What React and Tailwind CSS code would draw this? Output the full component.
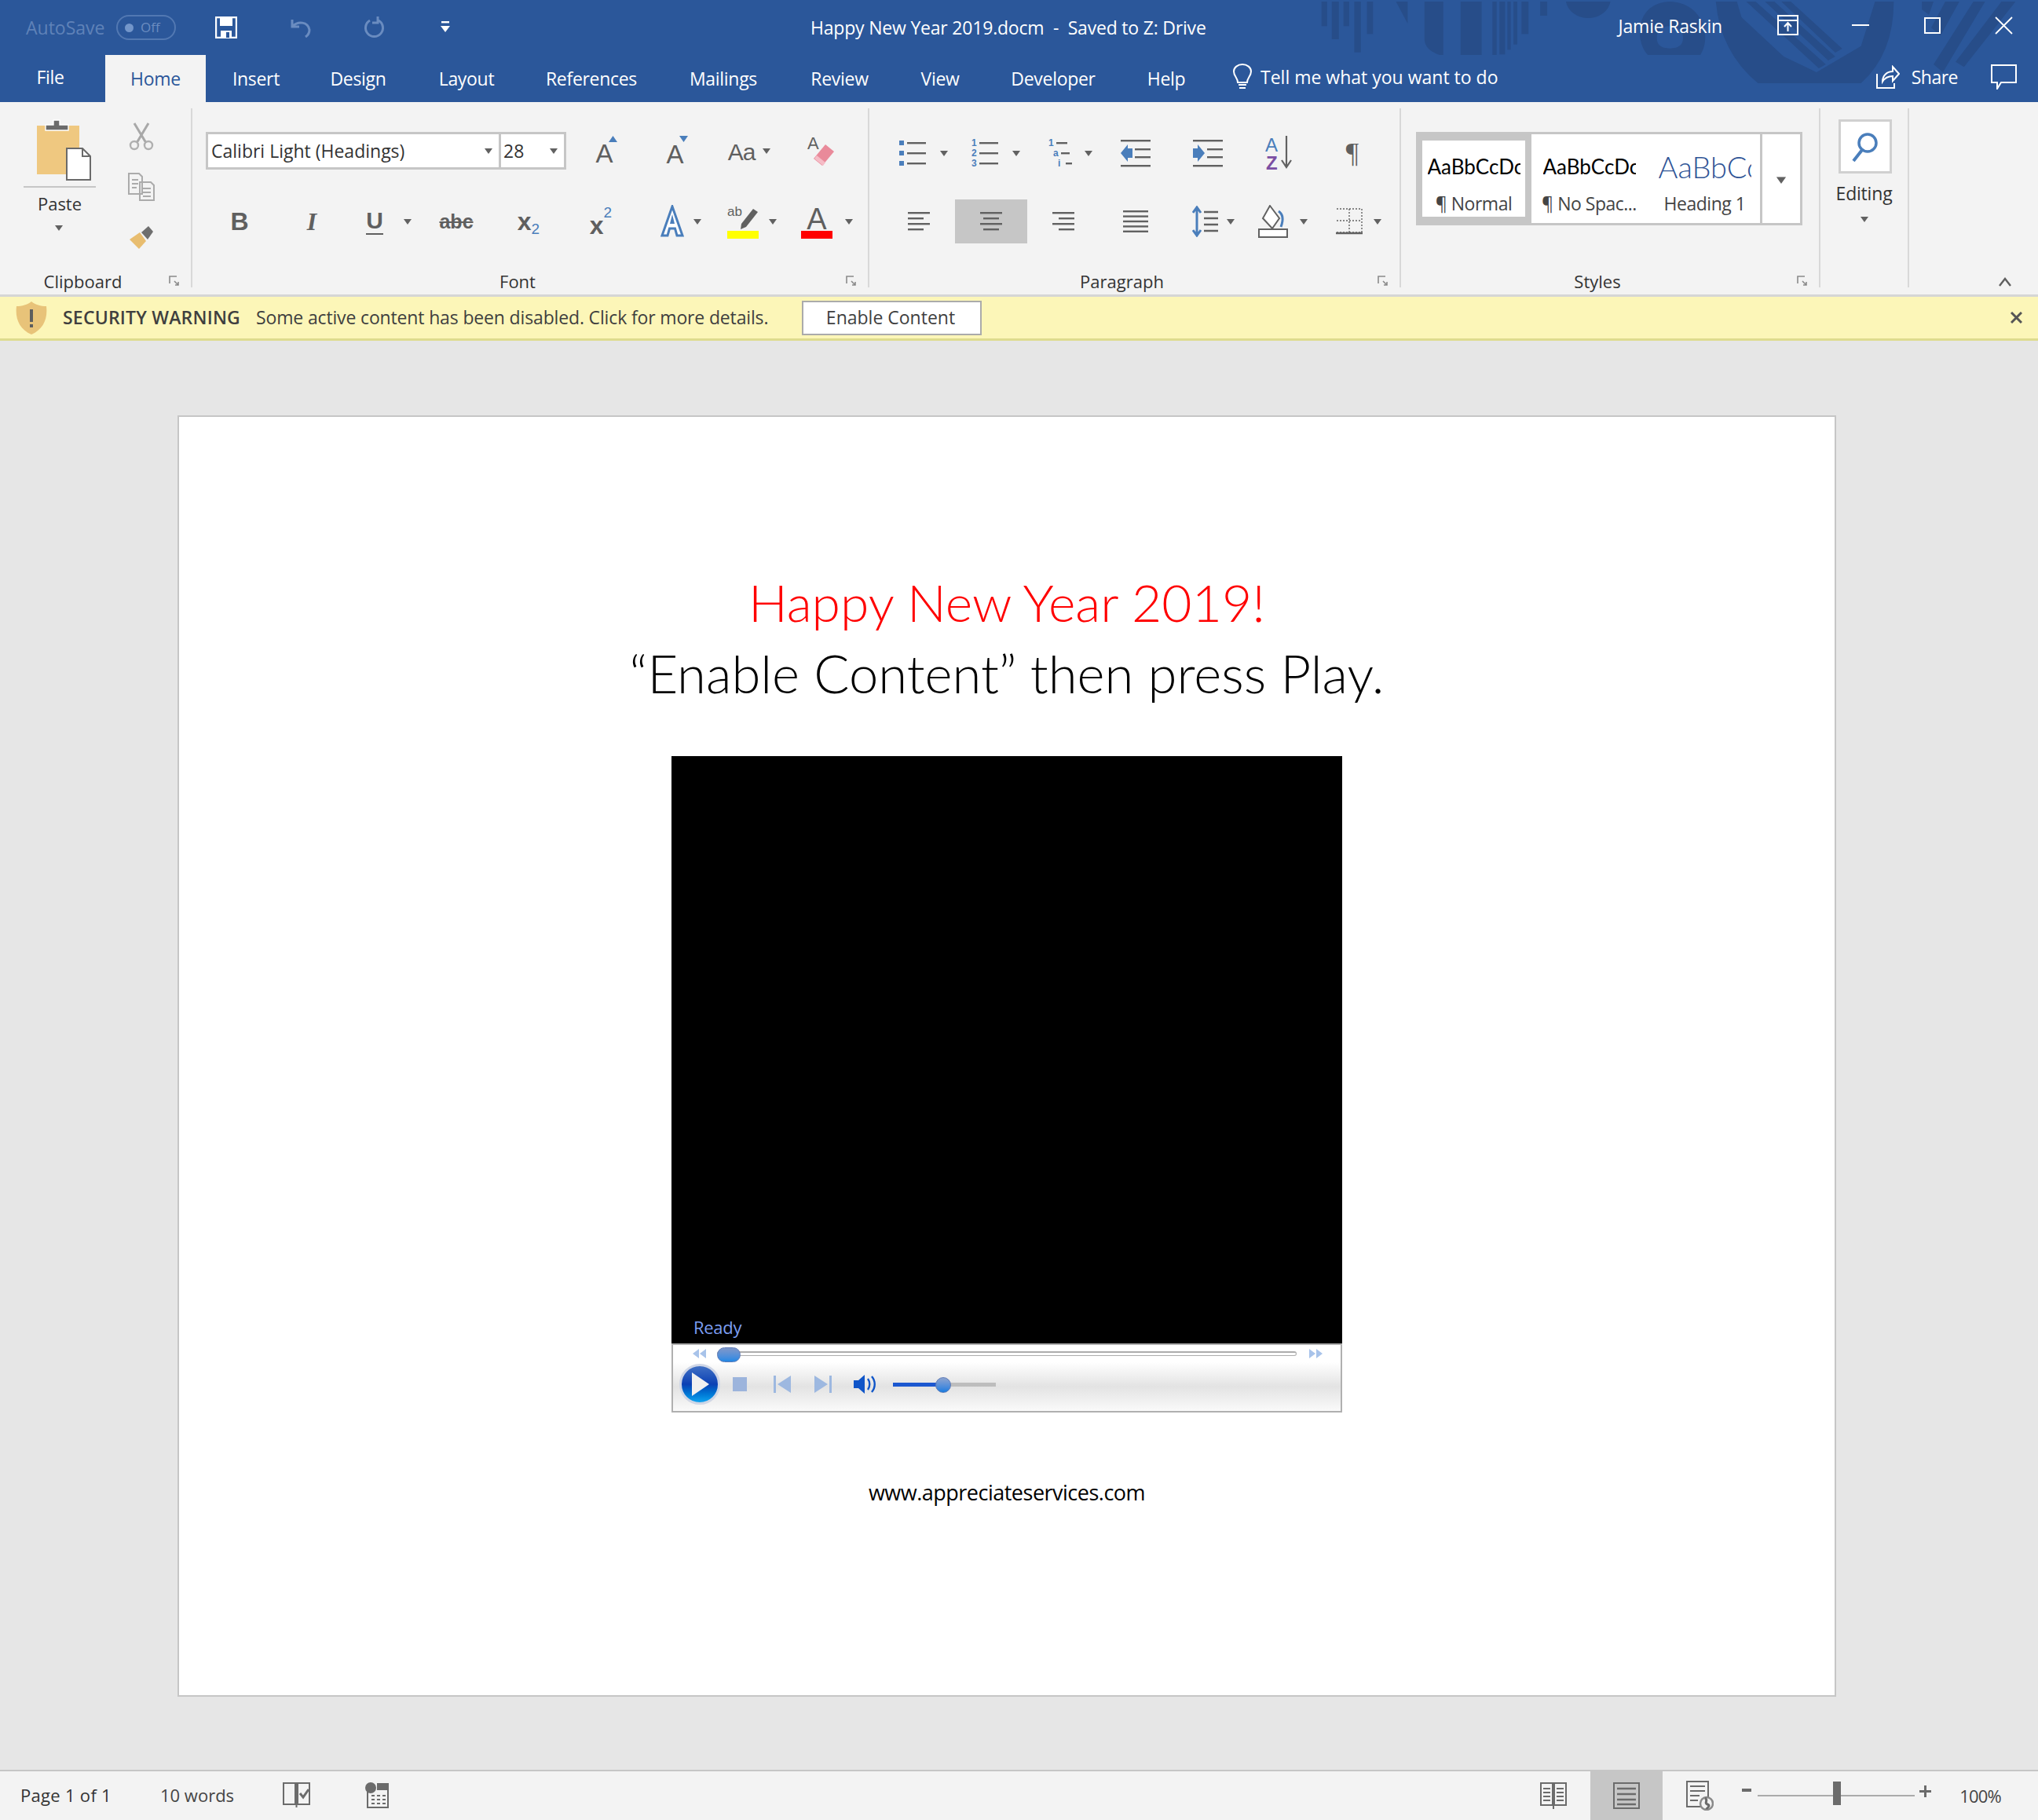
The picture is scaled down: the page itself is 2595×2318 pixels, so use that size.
import React from "react";

const ui = "font-['Open_Sans',sans-serif]";
const gray = "#616161";
const blue = "#4a7ebb";

function Caret({ color = gray, className = "" }) {
  return (
    <svg width="10" height="7" viewBox="0 0 10 7" className={`shrink-0 ${className}`}>
      <path d="M0 0h10L5 7z" fill={color} />
    </svg>
  );
}

function Launcher() {
  return (
    <svg width="14" height="14" viewBox="0 0 14 14">
      <path d="M1 10V1h9M7 7l5 5M8 12h4V8" fill="none" stroke="#8a8a8a" strokeWidth="1.6" />
    </svg>
  );
}

// one 92px wide ribbon button cell
function Cell({ children, active, className = "" }) {
  return (
    <div className={`w-[92px] h-[56px] flex items-center justify-center gap-[10px] shrink-0 ${active ? "bg-[#c6c6c6]" : ""} ${className}`}>
      {children}
    </div>
  );
}

function Group({ width, label, launcher = true, children }) {
  return (
    <div className={`${width} shrink-0 h-[228px] mt-[8px] border-r-2 border-[#d8d8d8] flex flex-col`}>
      <div className="flex-1 min-h-0">{children}</div>
      <div className="h-[24px] -mb-[4px] flex items-center shrink-0">
        <div className="flex-1 text-center text-[22px] leading-[24px] text-[#333]">{label}</div>
        <div className="w-[22px] mr-[10px] flex justify-center">{launcher && <Launcher />}</div>
      </div>
    </div>
  );
}

function ListIcon({ kind }) {
  const marks = kind === "num" ? ["1", "2", "3"] : ["1", "a", "i"];
  const xs = kind === "multi" ? [0, 6, 12] : [0, 0, 0];
  return (
    <svg width="36" height="36" viewBox="0 0 36 36">
      {[5, 18, 31].map((y, i) => (
        <g key={y}>
          {kind === "bullet" ? (
            <rect x="0" y={y - 3} width="6" height="6" fill={blue} />
          ) : (
            <text x={xs[i]} y={y + 4} fontSize="12" fontFamily="Liberation Sans" fill={blue} fontWeight="700">{marks[i]}</text>
          )}
          <rect x={xs[i] + 10} y={y - 1} width={kind === "multi" ? 14 - i * 3 : 24} height="2.4" fill={gray} />
        </g>
      ))}
    </svg>
  );
}

function IndentIcon({ flip }) {
  return (
    <svg width="38" height="36" viewBox="0 0 38 36">
      {[2, 13, 23, 34].map((y, i) => (
        <rect key={y} x={i === 0 || i === 3 ? 0 : 18} y={y - 1} width={i === 0 || i === 3 ? 38 : 20} height="2.4" fill={gray} />
      ))}
      {flip ? <path d="M0 12h6V7l9 11-9 11v-5H0z" fill={blue} /> : <path d="M15 12H9V7L0 18l9 11v-5h6z" fill={blue} />}
    </svg>
  );
}

function AlignIcon({ mode }) {
  const rows = mode === "justify"
    ? [[0, 32], [0, 32], [0, 32], [0, 32], [0, 32]]
    : [[0, 28], [4, 20], [0, 28], [4, 20]];
  return (
    <svg width="32" height="28" viewBox="0 0 32 28">
      {rows.map(([x, w], i) => (
        <rect key={i} x={mode === "justify" ? 0 : mode === "right" ? 30 - w : mode === "left" ? 2 : 2 + x} y={mode === "justify" ? i * 6.4 : 2 + i * 7} width={w} height="2.4" fill={gray} />
      ))}
    </svg>
  );
}

function Clipboard() {
  return (
    <svg width="70" height="78" viewBox="0 0 70 78">
      <rect x="0" y="8" width="54" height="62" fill="#efc880" />
      <path d="M11 14V7h10V1h8v6h11v7z" fill="#6b6b6b" stroke="#fff" strokeWidth="1.4" />
      <path d="M38 37h20l10 10v30H38z" fill="#fff" stroke="#6a6a6a" strokeWidth="2" />
      <path d="M58 37v10h10" fill="none" stroke="#6a6a6a" strokeWidth="2" />
    </svg>
  );
}

function TitleArt() {
  const bars = [[38, 50, 100], [60, 75, 150], [85, 97, 100], [108, 122, 200], [135, 148, 130], [335, 380, 210], [403, 412, 210], [418, 430, 208], [435, 442, 190], [448, 456, 170], [465, 480, 130], [505, 520, 60]];
  return (
    <svg className="absolute left-[1660px] top-0 pointer-events-none" width="935" height="130" viewBox="0 0 1568 390" preserveAspectRatio="none">
      <g fill="#274d89">
        {bars.map(([a, b, h]) => <rect key={a} x={a} y="6" width={b - a} height={h - 6} />)}
        <path d="M197 6h25v84zM258 6h40v204h-8q-32-20-32-60zM560 6h95a48 74 0 0 1-95 0z" />
        <path fillRule="evenodd" d="M735 210c-30-60-25-200 47-204 72 4 90 140 65 204zM782 100c-20 0-28 20-28 45s8 40 28 40 28-15 28-40-8-45-28-45z" />
        <path d="M880 6h45l10 60 90 150 70 60 95-100 30-170h40q0 200-70 312H970Q890 200 880 6z" />
        <path d="M945 6h20l150 240-15 15zM985 6h20l130 210-15 15zM1020 6h20l110 180-15 15z" />
        <path d="M1320 6h25l-10 50-15-20zM1370 6h30l-40 130-20-30zM1430 6h25l-90 270-20-30zM1490 6h30l-110 250-18-20z" />
      </g>
    </svg>
  );
}

function TitleBar() {
  return (
    <div className="relative z-10 h-[70px] flex items-center text-white text-[23px]">
      <div className="relative w-[1032px] shrink-0 flex items-center">
        <span className="ml-[33px] w-[115px] text-[#5f82b8]">AutoSave</span>
        <div className="w-[76px] h-[32px] rounded-full border-2 border-[#5278b2] flex items-center gap-[9px] pl-[9px] text-[17px] text-[#6a8cc0]">
          <span className="w-[11px] h-[11px] rounded-full bg-[#7396ca]" />Off
        </div>
        <svg className="ml-[50px]" width="28" height="28" viewBox="0 0 28 28">
          <path d="M1 1h26v26H1z" fill="none" stroke="#fff" strokeWidth="2.4" />
          <rect x="6" y="2" width="16" height="10" fill="#fff" />
          <rect x="7" y="18" width="14" height="9" fill="#fff" />
          <rect x="14" y="20" width="4" height="7" fill="#2b579a" />
        </svg>
        <svg className="ml-[68px]" width="26" height="26" viewBox="0 0 26 26">
          <path d="M3 11c6-6 19-6 21 5 0 4-2 7-5 9M2 3v9h9" fill="none" stroke="#6a8cc0" strokeWidth="3" />
        </svg>
        <svg className="ml-[66px]" width="28" height="28" viewBox="0 0 28 28">
          <path d="M9 5a11 11 0 1 0 11 0M19 0v8h-7" fill="none" stroke="#6a8cc0" strokeWidth="3" />
        </svg>
        <svg className="ml-[70px]" width="14" height="18" viewBox="0 0 14 18">
          <rect x="2" y="1" width="10" height="2.4" fill="#fff" />
          <path d="M1 7h12l-6 8z" fill="#fff" />
        </svg>
      </div>
      <span className="relative tracking-[-0.2px]">Happy New Year 2019.docm&nbsp; -&nbsp; Saved to Z: Drive</span>
      <div className="relative ml-auto flex items-center h-full">
        <span className="tracking-[-0.2px] mb-[4px]">Jamie Raskin</span>
        <svg className="ml-[70px] mb-[6px]" width="27" height="26" viewBox="0 0 27 26">
          <path d="M1 1h25v24H1zM1 7h25M13.500 21V11M9 15l4.500-5 4.500 5" fill="none" stroke="#fff" strokeWidth="2" />
        </svg>
        <span className="ml-[68px] mb-[6px] w-[22px] h-[2px] bg-white" />
        <span className="ml-[70px] mb-[6px] w-[21px] h-[21px] border-2 border-white" />
        <svg className="ml-[69px] mr-[32px] mb-[6px]" width="23" height="23" viewBox="0 0 23 23">
          <path d="M1 1l21 21M22 1L1 22" stroke="#fff" strokeWidth="1.8" />
        </svg>
      </div>
    </div>
  );
}

function TabBar() {
  const tabs = [
    ["Insert", "w-[128px]"], ["Design", "w-[132px]"], ["Layout", "w-[144px]"], ["References", "w-[174px]"],
    ["Mailings", "w-[162px]"], ["Review", "w-[134px]"], ["View", "w-[122px]"], ["Developer", "w-[166px]"], ["Help", "w-[122px]"],
  ];
  return (
    <div className="relative z-10 h-[60px] flex items-stretch text-white text-[23px] tracking-[-0.3px]">
      <div className="w-[134px] flex items-center justify-center pb-[4px] pr-[6px]">File</div>
      <div className="w-[128px] bg-[#f3f3f3] text-[#2b579a] flex items-center justify-center">Home</div>
      {tabs.map(([name, w]) => (
        <div key={name} className={`${w} flex items-center justify-center`}>{name}</div>
      ))}
      <div className="flex items-center ml-[23px] mb-[4px]">
        <svg width="26" height="34" viewBox="0 0 26 34">
          <path d="M7 24c0-6-5-8-5-14a11 9 0 0 1 22 0c0 6-5 8-5 14zM8 27h10M9 31h8" fill="none" stroke="#fff" strokeWidth="2" />
        </svg>
        <span className="ml-[10px] tracking-normal">Tell me what you want to do</span>
      </div>
      <div className="ml-auto flex items-center mb-[4px]">
        <svg width="30" height="30" viewBox="0 0 30 30">
          <path d="M1 11v18h22v-6M8 21c0-8 6-13 13-13V2l8 9-8 9v-6c-6 0-10 2-13 7z" fill="none" stroke="#fff" strokeWidth="2" />
        </svg>
        <span className="ml-[15px] tracking-[-0.5px]">Share</span>
        <svg className="ml-[42px] mr-[27px]" width="33" height="32" viewBox="0 0 33 32">
          <path d="M1 1h31v22H13l-5 8v-8H1z" fill="none" stroke="#fff" strokeWidth="2" />
        </svg>
      </div>
    </div>
  );
}

function ClipboardGroup() {
  return (
    <Group width="w-[245px]" label="Clipboard">
      <div className="flex h-full">
        <div className="ml-[30px] w-[92px] flex flex-col items-center">
          <div className="mt-[14px] ml-[12px] h-[85px]"><Clipboard /></div>
          <div className="w-[92px] h-[2px] bg-[#c6c6c6]" />
          <div className="mt-[6px] text-[22px] leading-[28px] text-[#333]">Paste</div>
          <Caret className="mt-[14px] -ml-[2px]" />
        </div>
        <div className="ml-[36px] w-[44px] flex flex-col items-center">
          <svg className="mt-[18px]" width="32" height="36" viewBox="0 0 32 36">
            <path d="M7 1l15 25M25 1L10 26" stroke="#a8a8a8" strokeWidth="3" />
            <circle cx="7" cy="29" r="5" fill="none" stroke="#b0b0b0" strokeWidth="2.4" />
            <circle cx="25" cy="29" r="5" fill="none" stroke="#b0b0b0" strokeWidth="2.4" />
          </svg>
          <svg className="mt-[28px]" width="34" height="36" viewBox="0 0 34 36">
            <path d="M1 1h13l4 4v22H1zM15 12h14l4 4v19H15z" fill="#f3f3f3" stroke="#ababab" strokeWidth="2" />
            <path d="M5 9h8M5 14h8M5 19h6M19 20h10M19 25h10M19 30h10" stroke="#ababab" strokeWidth="2" />
          </svg>
          <svg className="mt-[30px]" width="34" height="32" viewBox="0 0 34 32">
            <path d="M2 19L15 10l8 11-9 10z" fill="#e8bd6f" />
            <path d="M17 10l9-8 6 7-7 10z" fill="#6e6e6e" />
          </svg>
        </div>
      </div>
    </Group>
  );
}

const glyph = "font-['Liberation_Sans',sans-serif] text-[#5f5f5f] leading-none";

function FontGroup() {
  return (
    <Group width="w-[862px]" label="Font">
      <div className="flex items-center h-[48px] mt-[30px] ml-[17px]">
        <div className="w-[373px] h-[48px] bg-white border-[3px] border-r-0 border-[#c6c6c6] flex items-center pl-[4px] pr-[8px] text-[23px] text-[#333]">
          <span className="flex-1">Calibri Light (Headings)</span>
          <Caret />
        </div>
        <div className="w-[86px] h-[48px] bg-white border-[3px] border-[#c6c6c6] flex items-center pl-[3px] pr-[8px] text-[23px] text-[#333]">
          <span className="flex-1">28</span>
          <Caret />
        </div>
        <div className="ml-[3px] flex">
          <Cell>
            <span className="relative mt-[8px] ml-[4px]">
              <span className={`${glyph} text-[33px]`}>A</span>
            </span>
            <svg className="-ml-[16px] -mt-[30px]" width="11" height="8" viewBox="0 0 11 8"><path d="M0 8h11L5.500 0z" fill={blue} /></svg>
          </Cell>
          <Cell>
            <span className={`${glyph} text-[33px] mt-[8px]`}>A</span>
            <svg className="-ml-[16px] -mt-[30px]" width="11" height="8" viewBox="0 0 11 8"><path d="M0 0h11L5.500 8z" fill={blue} /></svg>
          </Cell>
          <Cell className="gap-[2px]">
            <span className={`${glyph} text-[30px] tracking-[-1px] mt-[3px]`}>Aa</span>
            <Caret />
          </Cell>
          <Cell>
            <svg width="40" height="40" viewBox="0 0 40 40">
              <text x="2" y="18" fontSize="22" fontFamily="Liberation Sans" fill={gray}>A</text>
              <path d="M25 12l11 9-15 18-11-9z" fill="#e98a9a" />
              <path d="M14 26l11 9-3 4-11-9z" fill="#f5bcc6" />
            </svg>
          </Cell>
        </div>
      </div>
      <div className="flex h-[56px] mt-[38px] ml-[14px] items-center">
        <Cell><span className={`${glyph} text-[32px] font-bold`}>B</span></Cell>
        <Cell><span className="text-[32px] leading-none italic font-bold text-[#5f5f5f] font-['Liberation_Serif',serif]">I</span></Cell>
        <Cell className="gap-[26px] pl-[12px]">
          <span className={`${glyph} text-[30px] font-bold border-b-2 border-[#5f5f5f] pb-[1px]`}>U</span>
          <Caret />
        </Cell>
        <Cell>
          <span className={`${glyph} text-[25px] font-bold line-through`}>abc</span>
        </Cell>
        <Cell>
          <span className="flex items-end">
            <span className={`${glyph} text-[32px] font-bold`}>x</span>
            <span className="text-[19px] leading-none font-['Liberation_Sans',sans-serif] text-[#4a7ebb] -mb-[3px]">2</span>
          </span>
        </Cell>
        <Cell>
          <span className="flex items-start">
            <span className={`${glyph} text-[32px] font-bold mt-[10px]`}>x</span>
            <span className="text-[19px] leading-none font-['Liberation_Sans',sans-serif] text-[#4a7ebb]">2</span>
          </span>
        </Cell>
        <Cell className="pl-[18px] gap-[8px]">
          <svg width="34" height="42" viewBox="0 0 34 42">
            <path d="M17 2L4 39h7l2.500-9h7l2.500 9h7z" fill="#fff" stroke="#4a7ebb" strokeWidth="3" />
            <path d="M17 12l-3 12h6z" fill="#4a7ebb" />
          </svg>
          <Caret />
        </Cell>
        <Cell className="w-[88px] gap-[13px] pl-[16px]">
          <div className="flex flex-col w-[40px] h-[44px]">
            <svg width="40" height="34" viewBox="0 0 40 34">
              <text x="0" y="15" fontSize="17" fontFamily="Liberation Sans" fill={gray}>ab</text>
              <path d="M33 6l6 4-15 19-7 3 1-7z" fill={gray} />
            </svg>
            <div className="h-[10px] bg-[#ffff00]" />
          </div>
          <Caret />
        </Cell>
        <Cell className="gap-[16px] pl-[24px]">
          <div className="flex flex-col items-center w-[40px]">
            <span className={`${glyph} text-[38px] h-[34px] leading-[34px]`}>A</span>
            <div className="h-[10px] w-[40px] bg-[#ff0000]" />
          </div>
          <Caret />
        </Cell>
      </div>
    </Group>
  );
}

function ParagraphGroup() {
  return (
    <Group width="w-[677px]" label="Paragraph">
      <div className="flex mt-[29px] ml-[17px]">
        <Cell className="gap-[16px] pl-[12px]"><ListIcon kind="bullet" /><Caret /></Cell>
        <Cell className="gap-[16px] pl-[12px]"><ListIcon kind="num" /><Caret /></Cell>
        <Cell className="gap-[1px] pl-[18px]"><ListIcon kind="multi" /><Caret /></Cell>
        <Cell><IndentIcon /></Cell>
        <Cell><IndentIcon flip /></Cell>
        <Cell>
          <svg width="38" height="44" viewBox="0 0 38 44">
            <text x="0" y="20" fontSize="24" fontFamily="Liberation Sans" fill={blue}>A</text>
            <text x="1" y="43" fontSize="24" fontWeight="700" fontFamily="Liberation Sans" fill="#7b4fa3">Z</text>
            <path d="M27 0v38M21 31l6 9 6-9" fill="none" stroke={gray} strokeWidth="2.200" />
          </svg>
        </Cell>
        <Cell><span className="font-['Liberation_Serif',serif] text-[36px] leading-none text-[#5f5f5f]">¶</span></Cell>
      </div>
      <div className="flex mt-[31px] ml-[17px]">
        <Cell><AlignIcon mode="left" /></Cell>
        <Cell active><AlignIcon mode="center" /></Cell>
        <Cell><AlignIcon mode="right" /></Cell>
        <Cell><AlignIcon mode="justify" /></Cell>
        <Cell className="gap-[5px] pl-[14px]">
          <svg width="34" height="40" viewBox="0 0 34 40">
            <path d="M6 2v36M1 9l5-7 5 7M1 31l5 7 5-7" fill="none" stroke={blue} strokeWidth="3" />
            <path d="M15 8h18M15 16h18M15 24h18M15 32h18" stroke={gray} strokeWidth="2.600" />
          </svg>
          <Caret />
        </Cell>
        <Cell className="gap-[15px] pl-[6px]">
          <svg width="38" height="42" viewBox="0 0 38 42">
            <path d="M15 1l12 16-9 13L6 17z" fill="#fff" stroke={gray} strokeWidth="2" />
            <path d="M26 8c6 4 6 12 3 20" fill="none" stroke={blue} strokeWidth="3" />
            <rect x="1" y="31" width="36" height="10" fill="#fff" stroke={gray} strokeWidth="2" />
          </svg>
          <Caret />
        </Cell>
        <Cell className="gap-[14px] pl-[16px]">
          <svg width="34" height="34" viewBox="0 0 34 34">
            <path d="M1 1h32v30H1M1 16h32M17 1v30" fill="none" stroke={gray} strokeWidth="1.400" strokeDasharray="2 2" />
            <path d="M0 32h34" stroke={gray} strokeWidth="2.600" />
          </svg>
          <Caret />
        </Cell>
      </div>
    </Group>
  );
}

function StyleSample({ sample, label, sel, big }) {
  return (
    <div className={`w-[147px] h-[113px] flex flex-col items-center shrink-0 border-[8px] ${sel ? "border-[#c6c6c6]" : "border-transparent"}`}>
      <div className={`h-[66px] w-[118px] overflow-hidden whitespace-nowrap flex items-center justify-start font-['Lato',sans-serif] ${big ? "text-[38px] text-[#2f5496] font-light" : "text-[26px] text-black"}`}>
        {sample}
      </div>
      <div className="text-[23px] leading-[28px] text-[#444] tracking-[-0.5px] whitespace-nowrap">{label}</div>
    </div>
  );
}

function StylesGroup() {
  return (
    <Group width="w-[534px]" label="Styles">
      <div className="flex ml-[19px] mt-[30px] h-[119px] w-[492px] bg-white border-y-[3px] border-[#c6c6c6]">
        <div className="flex w-[438px] overflow-hidden">
          <StyleSample sample="AaBbCcDc" label="¶ Normal" sel />
          <StyleSample sample="AaBbCcDc" label="¶ No Spac..." />
          <StyleSample sample="AaBbCc" label="Heading 1" big />
        </div>
        <div className="flex-1 border-x-[3px] border-[#c6c6c6] flex justify-center pt-[55px]">
          <Caret className="scale-125" />
        </div>
      </div>
    </Group>
  );
}

function Ribbon() {
  return (
    <div className="h-[245px] bg-[#f3f3f3] flex">
      <ClipboardGroup />
      <FontGroup />
      <ParagraphGroup />
      <StylesGroup />
      <div className="w-[113px] h-[228px] mt-[8px] border-r-2 border-[#d8d8d8] flex flex-col items-center shrink-0">
        <div className="mt-[14px] ml-[2px] w-[68px] h-[69px] bg-white border-[3px] border-[#d0d0d0] flex items-center justify-center">
          <svg width="36" height="40" viewBox="0 0 36 40">
            <circle cx="21" cy="15" r="11" fill="none" stroke={blue} strokeWidth="3.500" />
            <path d="M14 24L3 38" stroke={blue} strokeWidth="4" />
          </svg>
        </div>
        <div className="mt-[11px] text-[23px] leading-[28px] text-[#333] tracking-[-0.2px]">Editing</div>
        <Caret className="mt-[16px]" />
      </div>
      <div className="flex-1 flex items-end justify-end pb-[10px] pr-[34px]">
        <svg width="16" height="12" viewBox="0 0 16 12">
          <path d="M1 11l7-9 7 9" fill="none" stroke="#5f5f5f" strokeWidth="2.400" />
        </svg>
      </div>
    </div>
  );
}

function WarningBar() {
  return (
    <div className="h-[59px] bg-[#fcf6b8] border-t-[3px] border-b-[3px] border-t-[#d6d6d6] border-b-[#dedc8e] flex items-center text-[#3f3f3f] text-[23px]">
      <svg className="ml-[20px]" width="40" height="44" viewBox="0 0 40 44">
        <path d="M20 1c5 4 12 6 19 6 2 16-4 30-19 36C5 37-1 23 1 7c7 0 14-2 19-6z" fill="#e8c379" />
        <rect x="18" y="11" width="4" height="16" fill="#5d5d5d" />
        <rect x="18" y="30" width="4" height="4" fill="#5d5d5d" />
      </svg>
      <span className="ml-[20px] tracking-[0.2px] font-semibold w-[246px] whitespace-nowrap">SECURITY WARNING</span>
      <span className="tracking-[-0.15px] w-[695px] whitespace-nowrap">Some active content has been disabled. Click for more details.</span>
      <div className="w-[229px] h-[44px] bg-white border-[2px] border-[#ababab] flex items-center justify-center pr-[3px]">Enable Content</div>
      <svg className="ml-auto mr-[20px]" width="15" height="15" viewBox="0 0 15 15">
        <path d="M1 1l13 13M14 1L1 14" stroke="#555" strokeWidth="3" />
      </svg>
    </div>
  );
}

function Transport({ d, w = 22, h = 22, color = "#9db8e0" }) {
  return (
    <svg width={w} height={h} viewBox={`0 0 ${w} ${h}`}>
      <path d={d} fill={color} />
    </svg>
  );
}

function Player() {
  return (
    <div className="w-[854px] mt-[61px] flex flex-col">
      <div className="h-[748px] bg-black flex items-end pb-[7px] pl-[28px]">
        <span className="text-[22px] text-[#7c9ef2] leading-[28px] tracking-[-0.3px] font-['Open_Sans',sans-serif]">Ready</span>
      </div>
      <div className="h-[88px] border-2 border-[#b0b0b0] flex flex-col">
        <div className="h-[22px] flex items-center pl-[25px] bg-white">
          <Transport w={17} h={12} color="#a8c3ea" d="M8 0v12L0 6zM17 0v12L9 6z" />
          <div className="ml-[14px] w-[738px] h-[6px] border border-[#adadad] border-t-2 rounded-full relative">
            <div className="absolute -left-[1px] -top-[7px] w-[30px] h-[19px] rounded-full bg-gradient-to-b from-[#7e97c9] to-[#1e88e5] border border-[#5e7bb8]" />
          </div>
          <div className="ml-[16px]">
            <Transport w={17} h={12} color="#a8c3ea" d="M0 0v12l8-6zM9 0v12l8-6z" />
          </div>
        </div>
        <div className="flex-1 flex items-center pl-[8px] bg-gradient-to-b from-white via-[#e3e3e3] to-[#fafafa] pb-[6px]">
          <div className="w-[52px] h-[52px] rounded-full bg-gradient-to-b from-[#3f6fc4] via-[#0a3fb4] to-[#12a4f0] border-[3px] border-[#cfd6e6] flex items-center justify-center">
            <Transport w={24} h={30} color="#f0f0f0" d="M2 0l22 15L2 30z" />
          </div>
          <div className="ml-[16px] w-[18px] h-[18px] bg-[#9cb4dc]" />
          <div className="ml-[34px]"><Transport d="M0 0h3v22H0zM22 0v22L5 11z" /></div>
          <div className="ml-[30px]"><Transport d="M22 0h-3v22h3zM0 0v22l17-11z" /></div>
          <svg className="ml-[28px]" width="30" height="26" viewBox="0 0 30 26">
            <path d="M0 8h6l8-7v24l-8-7H0z" fill="#0f55c8" />
            <path d="M18 6c3 4 3 10 0 14M23 3c5 6 5 14 0 20" fill="none" stroke="#0f55c8" strokeWidth="2.400" />
          </svg>
          <div className="ml-[20px] w-[131px] h-[5px] bg-[#bdbdbd] relative">
            <div className="h-full w-[64px] bg-[#1c58d0]" />
            <div className="absolute left-[54px] -top-[7px] w-[20px] h-[20px] rounded-full bg-gradient-to-b from-[#8ba3d0] to-[#0e7ce0] border border-[#5e7bb8]" />
          </div>
        </div>
      </div>
    </div>
  );
}

function StatusBar() {
  return (
    <div className="h-[64px] bg-[#f3f3f3] border-t-2 border-[#c6c6c6] flex items-stretch text-[22px] text-[#444]">
      <div className="flex items-center pb-[2px]">
        <span className="ml-[26px] w-[178px] tracking-[0.3px] text-[#333]">Page 1 of 1</span>
        <span className="w-[156px]">10 words</span>
        <svg width="35" height="32" viewBox="0 0 35 32">
          <path d="M1 1h15v27H1zM19 1h15v27H19zM17.500 0v32" fill="none" stroke="#6b6b6b" strokeWidth="2" />
          <path d="M22 14l4 5 7-10" fill="none" stroke="#6b6b6b" strokeWidth="3" />
        </svg>
        <svg className="ml-[70px]" width="30" height="34" viewBox="0 0 30 34">
          <path d="M3 12v21h26V3H15" fill="none" stroke="#6b6b6b" strokeWidth="2" />
          <rect x="15" y="3" width="14" height="8" fill="#6b6b6b" />
          <circle cx="7" cy="8" r="7" fill="#6b6b6b" />
          <path d="M8 18h18M8 23h18M8 28h18" stroke="#6b6b6b" strokeWidth="2" strokeDasharray="4 3" />
        </svg>
      </div>
      <div className="ml-auto flex items-stretch">
        <div className="flex items-center w-[64px]">
          <svg width="34" height="34" viewBox="0 0 34 34">
            <path d="M1 1h15v28H1zM18 1h15v28H18zM17 0v34M4 8h9M4 13h9M4 18h9M4 23h9M21 8h9M21 13h9M21 18h9M21 23h9" fill="none" stroke="#6b6b6b" strokeWidth="2" />
          </svg>
        </div>
        <div className="w-[92px] bg-[#c6c6c6] flex items-center justify-center">
          <svg width="34" height="34" viewBox="0 0 34 34">
            <path d="M1 1h32v32H1z" fill="none" stroke="#6b6b6b" strokeWidth="2" />
            <path d="M5 8h24M5 15h24M5 22h24M5 28h24" stroke="#6b6b6b" strokeWidth="2.400" />
          </svg>
        </div>
        <div className="flex items-center pl-[30px]">
          <svg width="35" height="38" viewBox="0 0 35 38">
            <path d="M1 1h27v32H1z" fill="none" stroke="#6b6b6b" strokeWidth="2" />
            <path d="M5 7h19M5 13h19M5 19h12M5 25h10" stroke="#6b6b6b" strokeWidth="2" />
            <circle cx="26" cy="29" r="8" fill="#f3f3f3" stroke="#8a8a8a" strokeWidth="2.500" />
            <path d="M24 22c5 3 -2 6 3 8s-1 5-1 6" fill="none" stroke="#6b6b6b" strokeWidth="3" />
          </svg>
          <div className="ml-[36px] w-[12px] h-[4px] bg-[#6b6b6b] mb-[14px]" />
          <div className="ml-[8px] w-[200px] h-[2px] bg-[#ababab] relative">
            <div className="absolute left-[96px] -top-[17px] w-[10px] h-[30px] bg-[#6b6b6b]" />
          </div>
          <svg className="ml-[6px] mb-[12px]" width="15" height="15" viewBox="0 0 15 15">
            <path d="M0 6h15v3H0zM6 0h3v15H6z" fill="#6b6b6b" />
          </svg>
          <span className="ml-[36px] mr-[47px] tracking-[-0.8px]">100%</span>
        </div>
      </div>
    </div>
  );
}

export default function App() {
  return (
    <div className={`relative w-[2595px] h-[2318px] flex flex-col overflow-hidden ${ui}`}>
      <div className="absolute left-0 top-0 w-full h-[130px] bg-[#2b579a]"><TitleArt /></div>
      <TitleBar />
      <TabBar />
      <div className="relative z-10 flex-1 flex flex-col min-h-0">
        <Ribbon />
        <WarningBar />
        <div className="flex-1 bg-[#e6e6e6] pt-[95px] pl-[226px]">
          <div className="w-[2112px] h-[1632px] bg-white border-2 border-[#c6c6c6] flex flex-col items-center pt-[191px]">
            <div className="font-['Lato',sans-serif] font-light text-[66px] leading-[90px] text-[#ff0000]">Happy New Year 2019!</div>
            <div className="font-['Lato',sans-serif] font-light text-[67px] leading-[90px] text-black">“Enable Content” then press Play.</div>
            <Player />
            <div className="mt-[86px] text-[27px] leading-[36px] text-black font-['Open_Sans',sans-serif] tracking-[-0.5px] -translate-y-[2px]">www.appreciateservices.com</div>
          </div>
        </div>
        <StatusBar />
      </div>
    </div>
  );
}
